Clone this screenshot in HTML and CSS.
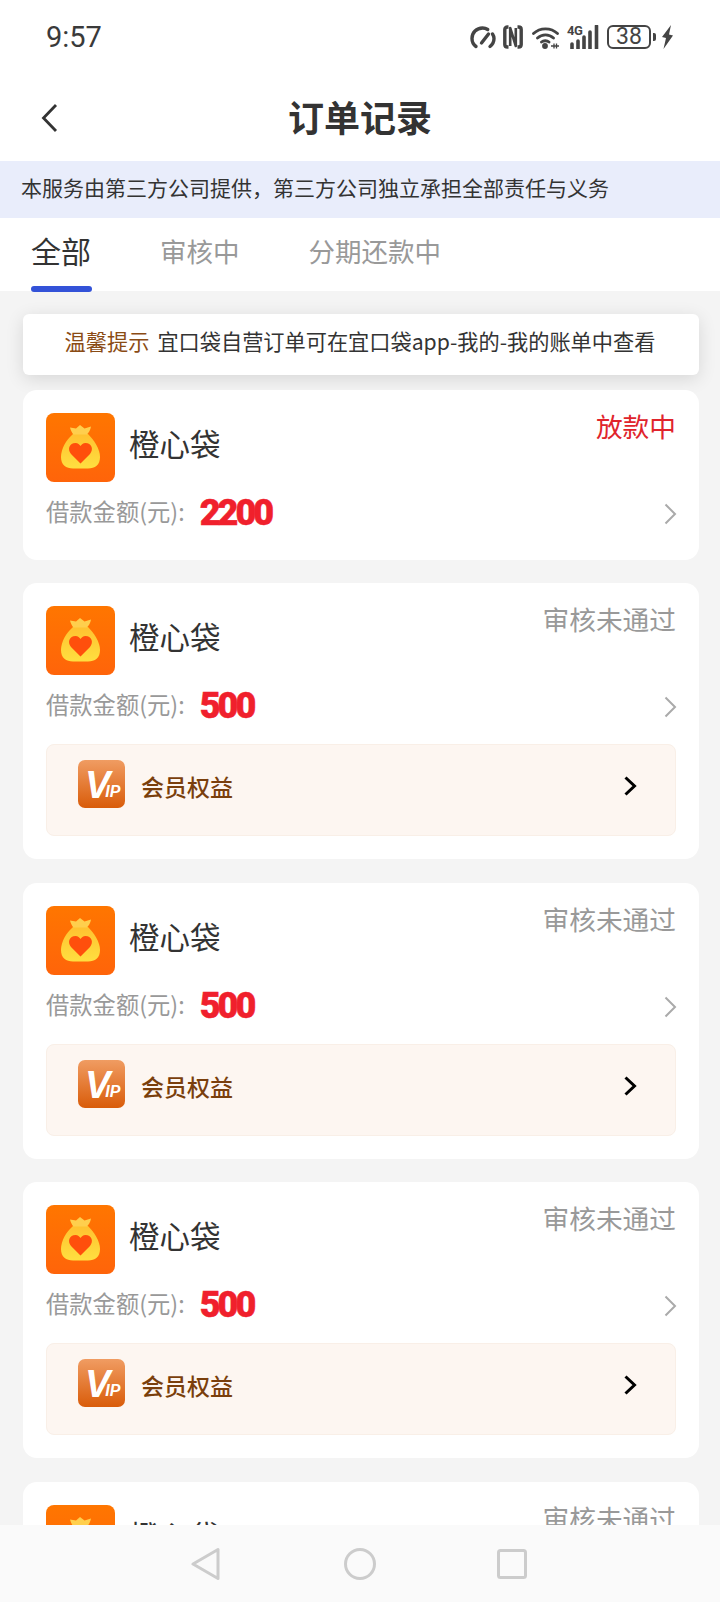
FILE: index.html
```html
<!DOCTYPE html>
<html lang="zh-CN">
<head>
<meta charset="utf-8">
<title>订单记录</title>
<link rel="stylesheet" href="styles.css">
</head>
<body>
<svg class="defs" aria-hidden="true">
  <defs>
    <linearGradient id="bagBg" x1="0" y1="0" x2="0" y2="1"><stop offset="0" stop-color="#ff7600"/><stop offset="1" stop-color="#ff640a"/></linearGradient>
    <linearGradient id="bagBody" x1="0" y1="0" x2="0" y2="1"><stop offset="0" stop-color="#ffc230"/><stop offset="1" stop-color="#ffdf40"/></linearGradient>
    <symbol id="bag" viewBox="0 0 69 69">
      <rect width="69" height="69" rx="8" fill="url(#bagBg)"/>
      <path d="M27 21C20 27 15 36 15 44C15 52 20 55.500 27 55.500H42C49 55.500 54 52 54 44C54 36 48 27 42 21Z" fill="url(#bagBody)"/>
      <path d="M24 14.500L30 15.500L34 12L38.500 15.500L45 13.500C44.500 17 42.500 20 41 21.500H27.500C26 20 24.800 17.500 24 14.500Z" fill="#ffcf4d"/>
      <path d="M34.500 50.500L25 41C21 36 23.500 30 29.500 30C32 30 33.500 31.500 34.500 33C35.500 31.500 37 30 39.500 30C45.500 30 48 36 44 41Z" fill="#ff4f0c"/>
    </symbol>
    <symbol id="chev-gray" viewBox="0 0 13 22"><path d="M1.500 1.500L11 11L1.500 20.500" fill="none" stroke="#aaa" stroke-width="2"/></symbol>
    <symbol id="chev-black" viewBox="0 0 13 20"><path d="M1.500 1.500L10.500 10L1.500 18.500" fill="none" stroke="#000" stroke-width="3"/></symbol>
  </defs>
</svg>

<div class="page">
  <header class="statusbar">
    <span class="time">9:57</span>
    <div class="status-icons">
      <svg class="si-speed" viewBox="0 0 26 24"><path d="M6 21.500C3.200 19.500 2 17 2 13.500C2 7.500 6.500 3 12.500 3C14.500 3 16.200 3.500 17.700 4.500M22.500 9C23.500 10.500 24 12 24 13.500C24 17 22.500 19.500 20 21.500" fill="none" stroke="#444" stroke-width="3.400" stroke-linecap="round"/><path d="M11.500 18L18.500 9" stroke="#444" stroke-width="3.400" stroke-linecap="round"/></svg>
      <svg class="si-nfc" viewBox="0 0 20 24"><path d="M5.500 2H4.500C2.800 2 1.800 3 1.800 4.500V19.500C1.800 21 2.800 22 4.500 22H5.500M14.500 2H15.500C17.200 2 18.200 3 18.200 4.500V19.500C18.200 21 17.200 22 15.500 22H14.500" fill="none" stroke="#444" stroke-width="3.400"/><path d="M7.200 21V3L12.800 21V3" fill="none" stroke="#444" stroke-width="2.600" stroke-linejoin="round"/></svg>
      <svg class="si-wifi" viewBox="0 0 27 24"><path d="M1.500 8.500C8 2.200 19 2.200 25.500 8.500M5.500 13C10 8.800 17 8.800 21.500 13M9.500 17C11.500 15.300 15 15.300 17 17" fill="none" stroke="#444" stroke-width="2.800" stroke-linecap="round"/><circle cx="13" cy="21" r="2.900" fill="#444"/><path d="M19 21H27M22 18.500V23.500M24.500 18.500V23.500" stroke="#444" stroke-width="1.300"/></svg>
      <div class="si-signal">
        <span class="net">4G</span>
        <svg viewBox="0 0 32 24"><path d="M5 24V19M11 24V16M17 24V12M23 24V7M29.500 24V1" stroke="#444" stroke-width="3.600" stroke-linecap="round"/></svg>
      </div>
      <div class="battery"><span class="battery-body">38</span><span class="battery-tip"></span></div>
      <svg class="si-bolt" viewBox="0 0 11 24"><path d="M9 0L0 12L4 13L1.500 24L11 10.500L7 9.500Z" fill="#444"/></svg>
    </div>
  </header>

  <nav class="titlebar">
    <svg class="back" viewBox="0 0 17 30"><path d="M15 2L2.500 15L15 28" fill="none" stroke="#333" stroke-width="2.800"/></svg>
    <h1 class="title">订单记录</h1>
  </nav>

  <div class="notice">本服务由第三方公司提供，第三方公司独立承担全部责任与义务</div>

  <div class="tabs">
    <div class="tab tab-active">全部<span class="tab-line"></span></div>
    <div class="tab">审核中</div>
    <div class="tab">分期还款中</div>
  </div>

  <main class="content">
    <div class="tip"><span class="tip-label">温馨提示</span><span>宜口袋自营订单可在宜口袋app-我的-我的账单中查看</span></div>

    <div class="list">
      <article class="card">
        <div class="head">
          <svg class="logo"><use href="#bag"/></svg>
          <span class="name">橙心袋</span>
          <span class="status status-red">放款中</span>
        </div>
        <div class="amount-row">
          <span class="label">借款金额(元):</span>
          <span class="amount">2200</span>
          <svg class="chev"><use href="#chev-gray"/></svg>
        </div>
      </article>

      <article class="card">
        <div class="head">
          <svg class="logo"><use href="#bag"/></svg>
          <span class="name">橙心袋</span>
          <span class="status">审核未通过</span>
        </div>
        <div class="amount-row">
          <span class="label">借款金额(元):</span>
          <span class="amount">500</span>
          <svg class="chev"><use href="#chev-gray"/></svg>
        </div>
        <div class="vip">
          <div class="vip-badge"><span class="vip-v">V</span><span class="vip-ip">IP</span></div>
          <span class="vip-text">会员权益</span>
          <svg class="vip-chev"><use href="#chev-black"/></svg>
        </div>
      </article>

      <article class="card">
        <div class="head">
          <svg class="logo"><use href="#bag"/></svg>
          <span class="name">橙心袋</span>
          <span class="status">审核未通过</span>
        </div>
        <div class="amount-row">
          <span class="label">借款金额(元):</span>
          <span class="amount">500</span>
          <svg class="chev"><use href="#chev-gray"/></svg>
        </div>
        <div class="vip">
          <div class="vip-badge"><span class="vip-v">V</span><span class="vip-ip">IP</span></div>
          <span class="vip-text">会员权益</span>
          <svg class="vip-chev"><use href="#chev-black"/></svg>
        </div>
      </article>

      <article class="card">
        <div class="head">
          <svg class="logo"><use href="#bag"/></svg>
          <span class="name">橙心袋</span>
          <span class="status">审核未通过</span>
        </div>
        <div class="amount-row">
          <span class="label">借款金额(元):</span>
          <span class="amount">500</span>
          <svg class="chev"><use href="#chev-gray"/></svg>
        </div>
        <div class="vip">
          <div class="vip-badge"><span class="vip-v">V</span><span class="vip-ip">IP</span></div>
          <span class="vip-text">会员权益</span>
          <svg class="vip-chev"><use href="#chev-black"/></svg>
        </div>
      </article>

      <article class="card">
        <div class="head">
          <svg class="logo"><use href="#bag"/></svg>
          <span class="name">橙心袋</span>
          <span class="status">审核未通过</span>
        </div>
      </article>
    </div>
  </main>

  <footer class="navbar">
    <svg class="nav-back" viewBox="0 0 29 34"><path d="M27 2.500V31.500L2 17Z" fill="none" stroke="#ccc" stroke-width="3" stroke-linejoin="round"/></svg>
    <svg class="nav-home" viewBox="0 0 32 32"><circle cx="16" cy="16" r="14.500" fill="none" stroke="#ccc" stroke-width="3"/></svg>
    <svg class="nav-recent" viewBox="0 0 30 30"><rect x="1.500" y="1.500" width="27" height="27" rx="2" fill="none" stroke="#ccc" stroke-width="3"/></svg>
  </footer>
</div>
</body>
</html>
```

FILE: styles.css
```css
* { box-sizing: border-box; }

html, body {
  margin: 0;
  padding: 0;
  background: #fff;
}

body {
  font-family: "Noto Sans CJK SC", "Noto Sans", sans-serif;
  color: #333;
}

.defs {
  position: absolute;
  width: 0;
  height: 0;
}

.page {
  width: 720px;
  height: 1602px;
  display: flex;
  flex-direction: column;
  overflow: hidden;
  background: #fff;
}

/* status bar */
.statusbar {
  height: 74px;
  flex: none;
  display: flex;
  align-items: center;
  justify-content: space-between;
  padding: 0 47px 0 46px;
}

.time {
  font-family: Roboto, sans-serif;
  font-size: 29px;
  line-height: 34px;
  color: #3a3a3a;
}

.status-icons {
  display: flex;
  align-items: center;
}

.status-icons svg { display: block; }

.si-speed { width: 26px; height: 24px; margin-right: 7px; }
.si-nfc { width: 20px; height: 24px; margin-right: 9px; }
.si-wifi { width: 27px; height: 24px; margin-right: 8px; }

.si-signal {
  width: 32px;
  height: 24px;
  margin-right: 8px;
  position: relative;
}

.si-signal svg { width: 32px; height: 24px; }

.net {
  position: absolute;
  left: 0;
  top: -1px;
  font-family: Roboto, sans-serif;
  font-size: 13px;
  line-height: 13px;
  font-weight: 700;
  letter-spacing: -0.500px;
  color: #444;
}

.battery {
  display: flex;
  align-items: center;
  margin-right: 6px;
}

.battery-body {
  width: 44px;
  height: 24px;
  border: 2px solid #444;
  border-radius: 6px;
  font-family: Roboto, sans-serif;
  font-size: 23px;
  line-height: 20px;
  text-align: center;
  color: #444;
}

.battery-tip {
  width: 3px;
  height: 8px;
  margin-left: 2px;
  background: #444;
  border-radius: 0 2px 2px 0;
}

.si-bolt { width: 11px; height: 24px; }

/* title bar */
.titlebar {
  height: 87px;
  flex: none;
  position: relative;
  display: flex;
  align-items: center;
  justify-content: center;
  padding-bottom: 4px;
}

.back {
  position: absolute;
  left: 41px;
  top: 29px;
  width: 17px;
  height: 30px;
}

.title {
  margin: 0;
  font-size: 36px;
  line-height: 50px;
  font-weight: 700;
  color: #333;
}

/* notice */
.notice {
  height: 57px;
  flex: none;
  display: flex;
  align-items: center;
  padding: 0 0 6px 21px;
  background: #e9edfb;
  font-size: 21px;
  color: #333;
}

/* tabs */
.tabs {
  height: 73px;
  flex: none;
  display: flex;
  align-items: center;
  padding: 0 0 8px 30px;
  gap: 69px;
}

.tab {
  position: relative;
  font-size: 26.500px;
  line-height: 40px;
  white-space: nowrap;
  color: #999;
}

.tab-active {
  font-size: 30px;
  color: #333;
  padding: 0 0 2px 1px;
  width: 61px;
}

.tab-line {
  position: absolute;
  left: 1px;
  bottom: -20px;
  width: 61px;
  height: 6px;
  border-radius: 3px;
  background: #3352d8;
}

/* content */
.content {
  flex: 1;
  min-height: 0;
  overflow: hidden;
  background: #f4f4f4;
  padding: 23px 21px 0 23px;
}

.tip {
  height: 61px;
  display: flex;
  align-items: center;
  justify-content: center;
  gap: 8px;
  padding: 0 2px 9px 0;
  background: #fff;
  border-radius: 6px;
  box-shadow: 0 4px 18px rgba(0, 0, 0, 0.12);
  font-size: 21.200px;
  color: #333;
}

.tip-label { color: #8a4b14; }

.list {
  margin-top: 14.800px;
  display: flex;
  flex-direction: column;
  gap: 23.500px;
}

.card {
  flex: none;
  background: #fff;
  border-radius: 14px;
  padding: 23px;
}

.head {
  display: flex;
  align-items: center;
  height: 69px;
}

.logo {
  width: 69px;
  height: 69px;
  flex: none;
}

.name {
  margin: 0 0 9px 14px;
  font-size: 30.500px;
  line-height: 40px;
  color: #333;
}

.status {
  margin-left: auto;
  margin-top: -2px;
  align-self: flex-start;
  font-size: 26.700px;
  line-height: 30px;
  color: #999;
}

.status-red { color: #e0242c; }

.amount-row {
  height: 40px;
  margin-top: 11px;
  margin-bottom: 4px;
  display: flex;
  align-items: center;
}

.label {
  font-size: 23.300px;
  margin-bottom: 4px;
  color: #999;
}

.amount {
  margin-left: 15px;
  font-family: Roboto, "Liberation Sans", sans-serif;
  font-size: 36px;
  line-height: 40px;
  font-weight: 900;
  letter-spacing: -3px;
  -webkit-text-stroke: 0.500px #f0202c;
  color: #f0202c;
}

.chev {
  margin: 2px -1px 0 auto;
  width: 13px;
  height: 22px;
}

.vip {
  height: 92px;
  margin-top: 18px;
  display: flex;
  align-items: center;
  padding: 0 38px 0 31px;
  background: #fdf6f1;
  border: 1px solid #f9efe7;
  border-radius: 8px;
}

.vip-badge {
  width: 47px;
  height: 48px;
  flex: none;
  margin-bottom: 12px;
  display: flex;
  align-items: flex-end;
  padding: 0 0 9px 7px;
  border-radius: 7px;
  background: linear-gradient(180deg, #f09c62 0%, #d95c0a 100%);
  color: #fff;
  font-family: "Liberation Sans", sans-serif;
  font-style: italic;
  font-weight: 700;
}

.vip-v {
  font-size: 38px;
  line-height: 28px;
  letter-spacing: -5px;
}

.vip-ip {
  font-size: 16px;
  line-height: 14px;
}

.vip-text {
  margin: 0 0 8px 16px;
  font-size: 23px;
  font-weight: 500;
  color: #7a3f0c;
}

.vip-chev {
  margin: 0 0 8px auto;
  width: 13px;
  height: 20px;
}

/* bottom bar */
.navbar {
  height: 77px;
  flex: none;
  position: relative;
  z-index: 1;
  display: flex;
  align-items: center;
  justify-content: center;
  gap: 123px;
  padding-right: 2px;
  background: #fafafa;
}

.nav-back { width: 29px; height: 34px; }
.nav-home { width: 32px; height: 32px; margin: 0 -2px 0 1px; }
.nav-recent { width: 30px; height: 30px; }
```
